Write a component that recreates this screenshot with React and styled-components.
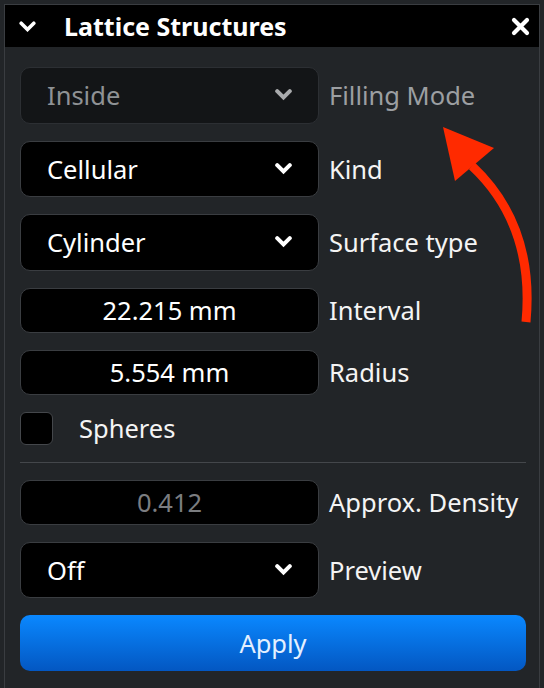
import React from "react";
import styled, { createGlobalStyle } from "styled-components";

const Global = createGlobalStyle`
  html, body { margin: 0; padding: 0; background: #222528; }
  body { font-family: "Noto Sans", "Open Sans", sans-serif; overflow: hidden; }
  * { box-sizing: border-box; }
`;

const Panel = styled.div`
  position: relative;
  margin: 4px 0 0 4px;
  width: 536px;
  height: 684px;
  border: 1px solid #3a3d41;
  border-bottom: none;
  background: #222528;
  display: flex;
  flex-direction: column;
`;

const Header = styled.div`
  height: 42px;
  background: #000;
  display: flex;
  align-items: center;
  padding: 0 9px 0 14px;
  color: #fff;
`;

const Title = styled.div`
  flex: 1;
  margin-left: 28px;
  font-size: 25px;
  font-weight: 700;
`;

const Body = styled.div`
  padding: 20px 13px 0 15px;
  display: flex;
  flex-direction: column;
  gap: 17px;
`;

const Row = styled.div`
  display: grid;
  grid-template-columns: 299px 1fr;
  column-gap: 10px;
  align-items: center;
`;

const Select = styled.div`
  height: 56.5px;
  border-radius: 10px;
  border: 1px solid ${(p) => (p.$disabled ? "#2c2f33" : "#3a3d41")};
  background: ${(p) => (p.$disabled ? "#131517" : "#000")};
  color: ${(p) => (p.$disabled ? "#8f9295" : "#fff")};
  display: flex;
  align-items: center;
  justify-content: space-between;
  padding: 0 26px 0 26px;
  font-size: 25.5px;
`;

const Input = styled.div`
  height: 45px;
  border-radius: 10px;
  border: 1px solid #3a3d41;
  background: #000;
  color: ${(p) => (p.$muted ? "#7b7d80" : "#fff")};
  display: flex;
  align-items: center;
  justify-content: center;
  font-size: 25.5px;
`;

const Label = styled.div`
  font-size: 25.5px;
  color: ${(p) => (p.$disabled ? "#9c9fa2" : "#f4f4f4")};
  white-space: nowrap;
`;

const CheckRow = styled.div`
  display: flex;
  align-items: center;
  gap: 26px;
  height: 33px;
`;

const Box = styled.div`
  width: 33px;
  height: 33px;
  border-radius: 6px;
  border: 1px solid #44474b;
  background: #000;
`;

const Divider = styled.div`
  height: 1px;
  background: #44474b;
`;

const Button = styled.div`
  height: 56px;
  border-radius: 10px;
  background: linear-gradient(#0a88ff, #0357c2);
  color: #e4f0ff;
  font-size: 25.5px;
  display: flex;
  align-items: center;
  justify-content: center;
`;

const Arrow = styled.svg`
  position: absolute;
  left: -5px;
  top: -5px;
  pointer-events: none;
`;

const Chevron = ({ color = "#fff" }) => (
  <svg width="17" height="12" viewBox="0 0 17 12">
    <path d="M2.2 2.2 L8.5 8.5 L14.8 2.2" fill="none" stroke={color} strokeWidth="4" strokeLinecap="round" />
  </svg>
);

const Close = () => (
  <svg width="19" height="19" viewBox="0 0 19 19">
    <path d="M3 3 L16 16 M16 3 L3 16" stroke="#fff" strokeWidth="4.2" strokeLinecap="round" />
  </svg>
);

export default function App() {
  return (
    <>
      <Global />
      <Panel>
        <Header>
          <svg width="17" height="11" viewBox="0 0 17 11">
            <path d="M2.2 2.2 L8.5 8.5 L14.8 2.2" fill="none" stroke="#fff" strokeWidth="3.6" strokeLinecap="round" />
          </svg>
          <Title>Lattice Structures</Title>
          <Close />
        </Header>
        <Body>
          <Row>
            <Select $disabled>
              <span>Inside</span>
              <Chevron color="#a9abad" />
            </Select>
            <Label $disabled>Filling Mode</Label>
          </Row>
          <Row>
            <Select>
              <span>Cellular</span>
              <Chevron />
            </Select>
            <Label>Kind</Label>
          </Row>
          <Row>
            <Select>
              <span>Cylinder</span>
              <Chevron />
            </Select>
            <Label>Surface type</Label>
          </Row>
          <Row>
            <Input>22.215 mm</Input>
            <Label>Interval</Label>
          </Row>
          <Row>
            <Input>5.554 mm</Input>
            <Label>Radius</Label>
          </Row>
          <CheckRow>
            <Box />
            <Label>Spheres</Label>
          </CheckRow>
          <Divider />
          <Row>
            <Input $muted>0.412</Input>
            <Label>Approx. Density</Label>
          </Row>
          <Row>
            <Select>
              <span>Off</span>
              <Chevron />
            </Select>
            <Label>Preview</Label>
          </Row>
          <Button>Apply</Button>
        </Body>
        <Arrow width="544" height="688" viewBox="0 0 544 688">
          <path d="M526 322 Q535 225 472 166" fill="none" stroke="#ff2a00" strokeWidth="9" />
          <polygon points="443,127 494,148 455,181" fill="#ff2a00" />
        </Arrow>
      </Panel>
    </>
  );
}
